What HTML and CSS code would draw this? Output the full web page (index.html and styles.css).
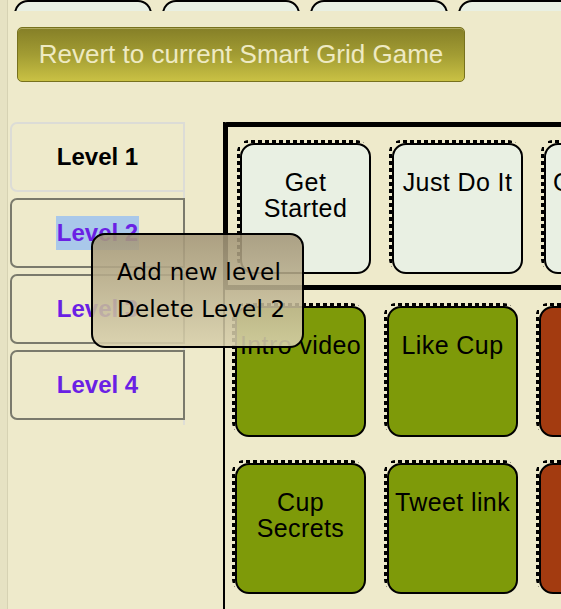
FILE: index.html
```html
<!DOCTYPE html>
<html>
<head>
<meta charset="utf-8">
<title>Smart Grid Game</title>
<link rel="stylesheet" href="styles.css">
</head>
<body>
<div class="page">
  <div class="top-tabs">
    <div class="tab"></div>
    <div class="tab"></div>
    <div class="tab"></div>
    <div class="tab"></div>
  </div>
  <div class="toolbar">
    <button class="revert">Revert to current Smart Grid Game</button>
  </div>
  <div class="workspace">
    <div class="levels">
      <div class="level current">Level 1</div>
      <div class="level"><span class="selected">Level 2</span></div>
      <div class="level">Level 3</div>
      <div class="level">Level 4</div>
    </div>
    <div class="grid">
      <div class="row active">
        <div class="card light">Get Started</div>
        <div class="card light">Just Do It</div>
        <div class="card light">Go Green</div>
      </div>
      <div class="row">
        <div class="card green">Intro video</div>
        <div class="card green">Like Cup</div>
        <div class="card rust">Share</div>
      </div>
      <div class="row">
        <div class="card green">Cup Secrets</div>
        <div class="card green">Tweet link</div>
        <div class="card rust">Blog</div>
      </div>
    </div>
  </div>
  <div class="context-menu">
    <div class="menu-item">Add new level</div>
    <div class="menu-item">Delete Level 2</div>
  </div>
</div>
</body>
</html>
```

FILE: styles.css
```css
html, body {
  margin: 0;
  height: 100%;
}

body {
  background: #e6e2c3;
  overflow: hidden;
  font-family: "Liberation Sans", Arial, sans-serif;
}

.page {
  position: relative;
  margin-left: 7px;
  border-left: 1px solid #d6d2b3;
  background: #eeeacb;
  min-height: 609px;
}

.top-tabs {
  display: flex;
  gap: 10px;
  padding-left: 6px;
  height: 11px;
  overflow: hidden;
}

.tab {
  flex: none;
  width: 138px;
  height: 30px;
  box-sizing: border-box;
  border: 2px solid #000;
  border-radius: 14px;
  background: #e9f0e3;
}

.toolbar {
  padding: 16px 0 0 9px;
}

.revert {
  display: block;
  width: 448px;
  height: 55px;
  padding: 0;
  border: 1px solid #77711d;
  border-radius: 5px;
  background: linear-gradient(#857f27, #a29c33 50%, #c9c144);
  box-shadow: inset 0 1px 0 rgba(255, 250, 200, 0.35);
  color: #eeeac2;
  font: 26px "Liberation Sans", Arial, sans-serif;
  text-align: center;
}

.workspace {
  display: flex;
  align-items: flex-start;
  margin-top: 40px;
}

.levels {
  flex: none;
  width: 173px;
  margin-left: 2px;
  display: flex;
  flex-direction: column;
  gap: 6px;
  border-right: 2px solid #deded6;
  padding-bottom: 5px;
}

.level {
  margin-right: -2px;
  height: 70px;
  box-sizing: border-box;
  border: 2px solid #7a7a6c;
  border-radius: 7px 0 0 7px;
  display: flex;
  align-items: center;
  justify-content: center;
  font-weight: bold;
  font-size: 24px;
  color: #6a20e4;
}

.level.current {
  border-color: #dcdcd6;
  color: #000;
}

.selected {
  background: #a9c8ea;
  padding: 3px 1px;
}

.grid {
  flex: 1;
  margin-left: 38px;
  border-left: 2px solid #000;
  min-height: 520px;
}

.row {
  position: relative;
  z-index: 0;
  display: flex;
  gap: 21px;
  padding: 16px 0 10px 10px;
}

.row.active {
  width: 600px;
  margin-left: -2px;
  border: 5px solid #000;
  border-radius: 4px;
  padding: 16px 0 11px 12px;
}

.card {
  flex: none;
  position: relative;
  width: 131px;
  height: 131px;
  box-sizing: border-box;
  border: 2px solid #000;
  border-radius: 14px;
  padding: 24px 1px 0;
  text-align: center;
  font-size: 25px;
  line-height: 26px;
  letter-spacing: 0.4px;
  color: #000;
}

.card::before {
  content: "";
  position: absolute;
  left: -5px;
  top: -5px;
  width: calc(100% + 4px);
  height: calc(100% + 4px);
  border-radius: 12px;
  background:
    repeating-linear-gradient(90deg, #000 0 4px, transparent 4px 7px) top left / 100% 3px no-repeat,
    repeating-linear-gradient(180deg, #000 0 4px, transparent 4px 7px) top left / 3px 100% no-repeat;
  z-index: -1;
}

.card.light {
  background: #e9f0e3;
}

.card.green {
  background: #7e9a09;
}

.card.rust {
  background: #a33b10;
}

.context-menu {
  position: absolute;
  left: 83px;
  top: 233px;
  z-index: 5;
  width: 213px;
  height: 115px;
  box-sizing: border-box;
  border: 2px solid #000;
  border-radius: 14px;
  padding: 19px 0 0 24px;
  background: linear-gradient(rgba(163, 150, 120, 0.88), rgba(216, 208, 172, 0.88));
  font: 23px/37px "DejaVu Sans", sans-serif;
  letter-spacing: 0.2px;
  color: #000;
}
```
